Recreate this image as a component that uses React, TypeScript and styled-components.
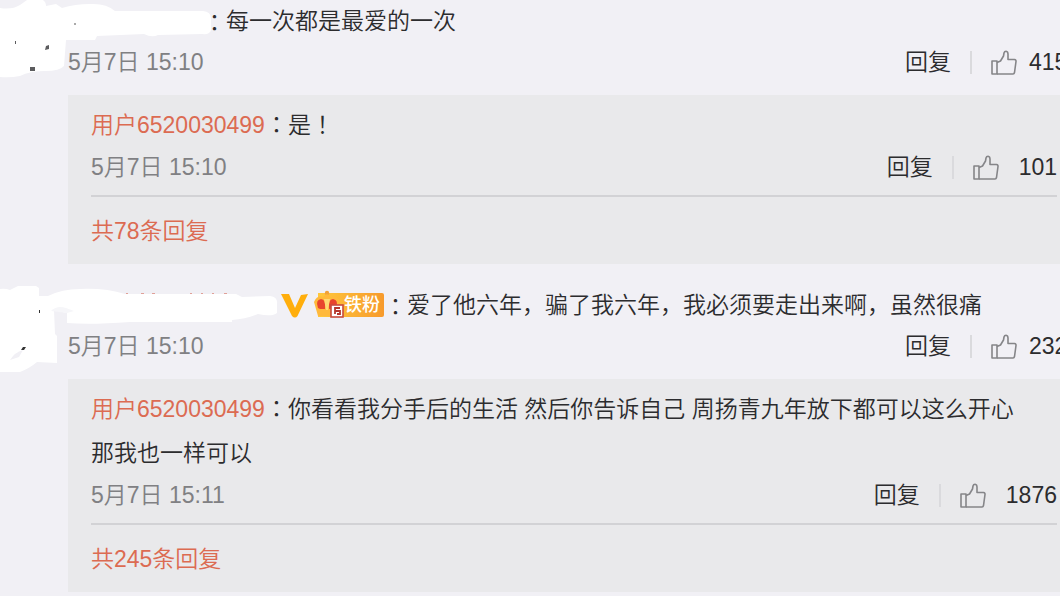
import React from "react";
import styled, { createGlobalStyle } from "styled-components";

const GlobalStyle = createGlobalStyle`
  * { box-sizing: border-box; }
  body {
    margin: 0;
    background: #f1f0f5;
    color: #2c2c2e;
    font-family: "Liberation Sans", "Noto Sans CJK SC", sans-serif;
    font-size: 23px;
    font-weight: 350;
  }
`;

const Page = styled.main`
  overflow: hidden;
  min-height: 100vh;
`;

const List = styled.div`
  display: flex;
  flex-direction: column;
  gap: 20px;
  margin-right: -20px;
`;

const Comment = styled.article`
  position: relative;
  padding-left: 68px;
`;

const Headline = styled.div`
  display: flex;
  align-items: center;
  line-height: 42px;
  white-space: nowrap;
`;

const HiddenName = styled.span<{ $width: number }>`
  flex: none;
  width: ${(p) => p.$width}px;
`;

const Mask = styled.svg`
  position: absolute;
  top: 0;
  left: 0;
  overflow: visible;
  pointer-events: none;
`;

const Centered = styled.span`
  font-family: "Noto Sans CJK JP", sans-serif;
  line-height: 1;
`;

const Meta = styled.div`
  display: flex;
  align-items: center;
  justify-content: space-between;
  line-height: 40px;
`;

const Time = styled.time`
  color: #808083;
`;

const Actions = styled.div`
  display: flex;
  align-items: center;
`;

const PlainButton = styled.button`
  display: flex;
  align-items: center;
  padding: 0;
  border: 0;
  background: none;
  color: inherit;
  font: inherit;
  line-height: 40px;
  cursor: pointer;
`;

const Separator = styled.span`
  width: 2px;
  height: 23px;
  margin: 0 19px;
  background: #dadadd;
`;

const LikeButton = styled(PlainButton)<{ $nested?: boolean }>`
  gap: ${(p) => (p.$nested ? 20 : 12)}px;
`;

const Count = styled.span<{ $nested?: boolean }>`
  min-width: ${(p) => (p.$nested ? 0 : 51)}px;
  text-align: left;
`;

const Replies = styled.section`
  margin-top: 13px;
  padding: 8px 23px 11px;
  background: #e9e9eb;
`;

const ReplyText = styled.p`
  margin: 0;
  line-height: 44px;
`;

const Link = styled.a`
  color: #dc6b52;
  text-decoration: none;
`;

const More = styled.div`
  margin-top: 8px;
  padding-top: 12px;
  border-top: 2px solid #d2d2d5;
  line-height: 44px;
`;

const FanBadge = styled.span`
  display: flex;
  align-items: center;
  height: 24px;
  margin-left: 5px;
  padding-right: 4px;
  border-radius: 2px;
  background: linear-gradient(90deg, transparent 5px, #ffc83c 5px, #f79a2c);
  color: #fff;
  font-size: 18px;
  font-weight: 500;
  line-height: 24px;
`;

const Thumb = () => (
  <svg width="26" height="26" viewBox="0 0 26 26" fill="none" stroke="#858588" strokeWidth="1.6" strokeLinejoin="round" aria-hidden="true">
    <path d="M1 12H6V25H1Z" />
    <path d="M6 13.5L9.5 12L12.5 7L13 4Q13.5 2.2 15 2.2Q17 2.5 17 5V10.5H23.5Q25.3 10.8 25 12.5L23.5 23.5Q23.2 25 22 25H6" />
  </svg>
);

const Verified = () => (
  <svg width="27" height="25" viewBox="0 0 27 25" role="img" aria-label="V">
    <path d="M0 1H8L14 15L20 2L27 1L16.5 23Q14 26 11 23Z" fill="#ffae0c" />
  </svg>
);

const Crown = () => (
  <svg width="31" height="30" viewBox="0 0 31 30" aria-hidden="true">
    <circle cx="14" cy="3" r="2.2" fill="#f1a13a" />
    <path d="M1 12Q4 5 10 7L14 4L18 7Q24 5 27 12L23 26H5Z" fill="#ffb93c" />
    <path d="M5 18Q2 10 8 9Q13 9 12 19H7Z" fill="#e8442e" />
    <path d="M16 19Q15 9 20 9Q26 10 23 18Z" fill="#e8442e" />
    <path d="M11 9H17L15 20H13Z" fill="#ffd774" />
    <rect x="18" y="15" width="12" height="12" fill="#fff" stroke="#c94a3d" strokeWidth="1.6" />
    <path d="M27 18H22V24M22 21H27V24H24" fill="none" stroke="#b5372e" strokeWidth="1.8" />
  </svg>
);

const Colon = () => <Centered>：</Centered>;

interface MetaRowProps {
  time: string;
  likes: string;
  nested?: boolean;
}

const MetaRow = ({ time, likes, nested }: MetaRowProps) => (
  <Meta>
    <Time>{time}</Time>
    <Actions>
      <PlainButton type="button">回复</PlainButton>
      <Separator />
      <LikeButton type="button" $nested={nested}>
        <Thumb />
        <Count $nested={nested}>{likes}</Count>
      </LikeButton>
    </Actions>
  </Meta>
);

interface ReplyBoxProps {
  children: React.ReactNode;
  time: string;
  likes: string;
  total: string;
}

const ReplyBox = ({ children, time, likes, total }: ReplyBoxProps) => (
  <Replies>
    <ReplyText>
      <Link href="#user">用户6520030499</Link>
      <Colon />
      {children}
    </ReplyText>
    <MetaRow time={time} likes={likes} nested />
    <More>
      <Link href="#replies">{total}</Link>
    </More>
  </Replies>
);

export default function App() {
  return (
    <>
      <GlobalStyle />
      <Page>
        <List>
          <Comment>
            <Headline>
              <HiddenName $width={135} />
              <Colon />
              每一次都是最爱的一次
            </Headline>
            <MetaRow time="5月7日 15:10" likes="415" />
            <ReplyBox time="5月7日 15:10" likes="101" total="共78条回复">
              是<Centered>！</Centered>
            </ReplyBox>
            <Mask width="212" height="78" viewBox="0 0 212 78" aria-hidden="true">
              <path
                fill="#fff"
                d="M0 8Q12 10 20 5L27 0H43Q46 2 46 6L56 4L62 8Q75 4 90 4Q106 3 115 11L203 11Q211 12 211 18V30Q210 35 202 34L158 35Q152 38 144 34L97 36L95 40H66L64 66Q60 71 45 71Q30 71 20 76Q10 78 0 77Z"
              />
              <g fill="#5c5c5e">
                <rect x="74" y="23" width="2" height="2" fill="#aaa" />
                <rect x="15" y="41" width="1" height="3" />
                <path d="M46 46L49 45V49L45 50Z" />
                <rect x="30" y="67" width="5" height="4" />
              </g>
            </Mask>
          </Comment>
          <Comment>
            <Headline>
              <HiddenName $width={213} />
              <Verified />
              <FanBadge>
                <Crown />
                铁粉
              </FanBadge>
              <Colon />
              爱了他六年，骗了我六年，我必须要走出来啊，虽然很痛
            </Headline>
            <MetaRow time="5月7日 15:10" likes="232" />
            <ReplyBox time="5月7日 15:11" likes="1876" total="共245条回复">
              你看看我分手后的生活 然后你告诉自己 周扬青九年放下都可以这么开心
              <br />
              那我也一样可以
            </ReplyBox>
            <Mask width="278" height="90" viewBox="0 0 278 90" aria-hidden="true">
              <path
                fill="#fff"
                d="M0 5Q5 4 10 6L18 2H36L39 4V12L48 12Q62 5 80 5Q106 4 125 10H236L242 13L270 12Q278 13 277 20V29Q272 33 258 30Q246 35 232 36V38L130 38Q90 41 67 39V29L54 26L55 50L57 52V79L37 78Q30 84 20 88H0Z"
              />
              <path d="M51 27Q57 21 66 24L74 27L67 29Z" fill="#f6f6f9" />
              <path d="M10 76Q15 68 23 66L19 73Z" fill="#f1f0f5" />
              <rect x="39" y="26" width="1" height="3" fill="#333" />
              <path d="M21 66L23 63L26 63L24 66Z" fill="#333" />
              <g fill="#e0a098">
                <rect x="126" y="9" width="2" height="1" />
                <rect x="141" y="9" width="3" height="1" />
                <rect x="152" y="9" width="3" height="1" />
                <rect x="190" y="9" width="2" height="1" />
                <rect x="201" y="9" width="2" height="1" />
                <rect x="212" y="9" width="2" height="1" />
                <rect x="224" y="9" width="3" height="1" />
              </g>
            </Mask>
          </Comment>
        </List>
      </Page>
    </>
  );
}
